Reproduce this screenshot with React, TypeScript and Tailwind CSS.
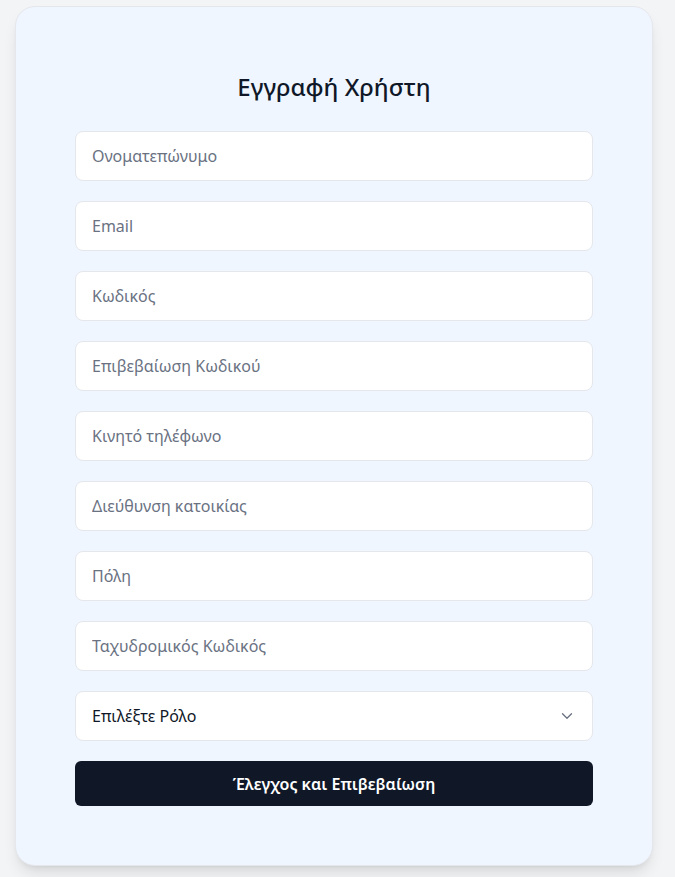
import { ChevronDown } from "lucide-react";

const FIELDS = [
  { placeholder: "Ονοματεπώνυμο", type: "text" },
  { placeholder: "Email", type: "email" },
  { placeholder: "Κωδικός", type: "password" },
  { placeholder: "Επιβεβαίωση Κωδικού", type: "password" },
  { placeholder: "Κινητό τηλέφωνο", type: "tel" },
  { placeholder: "Διεύθυνση κατοικίας", type: "text" },
  { placeholder: "Πόλη", type: "text" },
  { placeholder: "Ταχυδρομικός Κωδικός", type: "text" },
];

export default function App() {
  return (
    <div
      className="min-h-screen bg-gray-100 pt-[6px] pb-[11px]"
      style={{ fontFamily: '"Noto Sans", "Open Sans", sans-serif' }}
    >
      <div className="ml-[15px] w-[638px] rounded-[20px] border border-gray-200 bg-blue-50 px-[59px] pt-[64px] pb-[59px] shadow-lg">
        <h1 className="mb-[28px] text-center text-2xl leading-8 font-medium text-gray-900">
          Εγγραφή Χρήστη
        </h1>

        <form className="flex flex-col gap-5" onSubmit={(e) => e.preventDefault()}>
          {FIELDS.map((f) => (
            <input
              key={f.placeholder}
              type={f.type}
              placeholder={f.placeholder}
              className="h-[50px] w-full rounded-lg border border-gray-200 bg-white px-4 text-base text-gray-900 placeholder:text-gray-500 outline-none"
            />
          ))}

          {/* Επιλογή ρόλου */}
          <div className="relative">
            <select
              defaultValue=""
              className="h-[50px] w-full appearance-none rounded-lg border border-gray-200 bg-white px-4 text-base text-gray-900 outline-none"
            >
              <option value="" disabled>
                Επιλέξτε Ρόλο
              </option>
              <option value="user">Χρήστης</option>
              <option value="admin">Διαχειριστής</option>
            </select>
            <ChevronDown
              size={18}
              strokeWidth={1.75}
              className="pointer-events-none absolute top-1/2 right-[17px] -translate-y-1/2 text-gray-500"
            />
          </div>

          <button
            type="submit"
            className="h-[45px] w-full rounded-md bg-gray-900 text-base font-semibold text-white"
          >
            Έλεγχος και Επιβεβαίωση
          </button>
        </form>
      </div>
    </div>
  );
}
